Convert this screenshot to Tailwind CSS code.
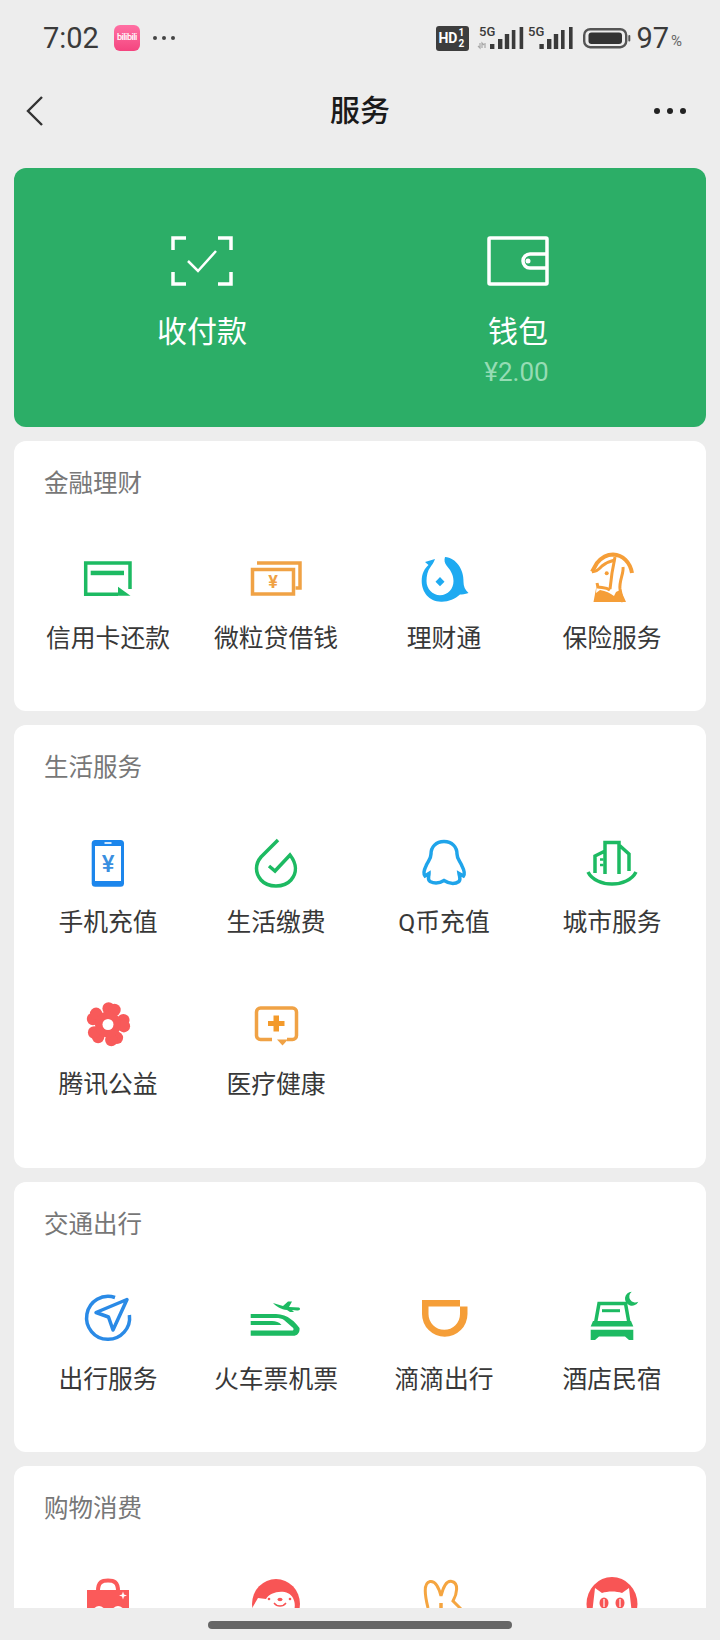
<!DOCTYPE html>
<html lang="zh-CN">
<head>
    <meta charset="UTF-8">
    <meta name="viewport" content="width=device-width, initial-scale=1.0">
    <title>服务</title>
    <script src="https://cdn.jsdelivr.net/npm/@tailwindcss/browser@4"></script>
</head>
<body class="bg-[#ededed] font-['Roboto','Noto_Sans_CJK_SC',sans-serif]">
<div class="relative h-[1640px] w-[720px] overflow-hidden">

    <!-- Status bar -->
    <div class="flex h-[76px] items-center pl-[43px] pr-[38px]">
        <span class="text-[29px] leading-none text-[#3a3a3a]">7:02</span>
        <div class="ml-[15px] flex h-[26px] w-[26px] items-center justify-center overflow-hidden rounded-[6px] bg-gradient-to-b from-[#ff6fa3] to-[#f4447f] text-[9px] font-medium tracking-[-0.5px] text-white">bilibili</div>
        <div class="ml-[13px] flex gap-[5px]">
            <span class="h-[4px] w-[4px] rounded-full bg-[#444]"></span>
            <span class="h-[4px] w-[4px] rounded-full bg-[#444]"></span>
            <span class="h-[4px] w-[4px] rounded-full bg-[#444]"></span>
        </div>
        <div class="ml-auto flex items-center">
            <div class="flex h-[25px] w-[33px] items-center rounded-[3px] bg-[#3d3d3d] pl-[2px] text-white">
                <span class="text-[14px] font-bold leading-none">HD</span>
                <span class="ml-[1px] flex flex-col text-[10px] font-bold leading-[11px]"><span>1</span><span>2</span></span>
            </div>
            <svg class="ml-[8px]" width="47" height="26" viewBox="0 0 47 26">
                <text x="2" y="11" font-size="13" font-weight="500" fill="#3a3a3a" font-family="Roboto">5G</text>
                <path d="M3 18v5l-2-2M5 23v-5l2 2M8 18v5" stroke="#a8a8a8" stroke-width="1.2" fill="none"/>
                <g fill="#3a3a3a">
                    <rect x="13" y="19" width="4.400" height="5"/><rect x="21" y="14" width="4.400" height="10"/><rect x="27.800" y="9" width="4.400" height="15"/><rect x="34.800" y="5" width="3.600" height="19"/><rect x="42.600" y="2" width="3.600" height="22"/>
                </g>
            </svg>
            <svg class="ml-[4px]" width="45" height="26" viewBox="0 0 45 26">
                <text x="0" y="11" font-size="13" font-weight="500" fill="#3a3a3a" font-family="Roboto">5G</text>
                <g fill="#3a3a3a">
                    <rect x="11.400" y="19" width="4.400" height="5"/><rect x="19" y="14" width="4.400" height="10"/><rect x="25.800" y="9" width="4.400" height="15"/><rect x="33" y="5" width="3.600" height="19"/><rect x="41" y="2" width="3.600" height="22"/>
                </g>
            </svg>
            <svg class="ml-[10px]" width="48" height="22" viewBox="0 0 48 22">
                <rect x="1.200" y="2.200" width="42" height="18" rx="6" fill="none" stroke="#555" stroke-width="2.400"/>
                <rect x="5.500" y="5.500" width="33.500" height="11.500" rx="3" fill="#333"/>
                <rect x="45.300" y="8" width="2" height="6.500" rx="1" fill="#555"/>
            </svg>
            <span class="ml-[5px] text-[29px] leading-none text-[#3a3a3a]">97</span>
            <span class="ml-[2px] mt-[6px] text-[15px] leading-none text-[#666]">%</span>
        </div>
    </div>

    <!-- Nav bar -->
    <div class="relative flex h-[70px] items-center justify-center">
        <svg class="absolute left-[25px] top-[19px]" width="20" height="32" viewBox="0 0 20 32">
            <path d="M17 2 L3 16 L17 30" fill="none" stroke="#333" stroke-width="2.400"/>
        </svg>
        <h1 class="text-[30px] font-medium leading-none text-[#1a1a1a]">服务</h1>
        <div class="absolute right-[34px] top-[32px] flex gap-[7px]">
            <span class="h-[6px] w-[6px] rounded-full bg-[#222]"></span>
            <span class="h-[6px] w-[6px] rounded-full bg-[#222]"></span>
            <span class="h-[6px] w-[6px] rounded-full bg-[#222]"></span>
        </div>
    </div>

    <div class="flex flex-col gap-[14px] px-[14px] pt-[22px]">

        <!-- Pay / wallet -->
        <div class="grid h-[259px] grid-cols-2 rounded-[12px] bg-[#2cae67] px-[30px] pt-[68px] text-white">
            <div class="flex flex-col items-center">
                <svg width="62" height="50" viewBox="0 0 62 50" fill="none" stroke="#fff" stroke-width="3.500">
                    <path d="M15 2H2V14M47 2H60V14M2 36V48H15M60 36V48H47"/>
                    <path d="M17 25 L27 35 L45 15" stroke-width="2.500"/>
                </svg>
                <span class="mt-[24px] text-[30px] leading-[44px]">收付款</span>
            </div>
            <div class="flex flex-col items-center">
                <svg width="62" height="50" viewBox="0 0 62 50" fill="none" stroke="#fff" stroke-width="3.500">
                    <rect x="2" y="2" width="58" height="46" rx="1"/>
                    <path d="M60 18H43a7 7 0 0 0 0 14H60"/>
                    <circle cx="41" cy="25" r="2.500" fill="#fff" stroke="none"/>
                </svg>
                <span class="mt-[24px] text-[30px] leading-[44px]">钱包</span>
                <span class="-ml-[3px] mt-[3px] text-[26px] leading-[30px] text-[#96dcb4]">¥2.00</span>
            </div>
        </div>

        <!-- 金融理财 -->
        <section class="h-[270px] rounded-[12px] bg-white pt-[29px]">
            <h2 class="pl-[30px] text-[24.500px] leading-[28px] text-[#777]">金融理财</h2>
            <div class="mt-[51px] grid grid-cols-4 px-[10px]">
                <div class="flex flex-col items-center">
                    <svg width="60" height="60" viewBox="0 0 60 60" fill="none">
                        <path d="M52 40V14H7.700V45.300H40" stroke="#1dba62" stroke-width="3.500"/>
                        <rect x="12.700" y="21.700" width="33.300" height="4.500" fill="#1dba62"/>
                        <path d="M40 37.700 L52.500 46.800 H40Z" fill="#1dba62"/>
                    </svg>
                    <span class="mt-[13px] text-[24.800px] leading-[34px] text-[#383838]">信用卡还款</span>
                </div>
                <div class="flex flex-col items-center">
                    <svg width="60" height="60" viewBox="0 0 60 60" fill="none" stroke="#f0a245" stroke-width="3.500">
                        <rect x="6.500" y="20.500" width="41" height="24.500"/>
                        <path d="M11 14H54V39H49.500"/>
                        <text x="27" y="39" text-anchor="middle" font-size="18" font-weight="700" font-family="Roboto" fill="#f0a245" stroke="none">¥</text>
                    </svg>
                    <span class="mt-[13px] text-[24.800px] leading-[34px] text-[#383838]">微粒贷借钱</span>
                </div>
                <div class="flex flex-col items-center">
                    <svg width="60" height="60" viewBox="0 0 60 60" fill="#1eaaf1">
                        <path d="M31 8C42 9 50 20 49.500 33C49.500 37 51 41 54.500 44C51 45 48 45.500 46 45.500C41 50 34 53 27 52.700C15 52.500 7.700 43 7.700 32C7.700 24 11 19 14.500 16L11 13L21 10C20 13 18 16 16.500 18C13.500 21.500 12.500 27 12.500 32C12.500 40 18.500 46.200 26 46.200C34 46.200 39.500 40 39.500 32C39.500 25 35.500 20 32.500 16.500C30.500 14 30 11 31 8Z"/>
                        <path d="M26 28 L30.500 32.700 L26 37.200 L21.500 32.700Z"/>
                    </svg>
                    <span class="mt-[13px] text-[24.800px] leading-[34px] text-[#383838]">理财通</span>
                </div>
                <div class="flex flex-col items-center">
                    <svg width="60" height="60" viewBox="0 0 60 60" fill="none" stroke="#f59e38" stroke-width="3">
                        <path d="M10 22.700L15 14C20 8 26 5.500 31 5.500C41 6 48 13 50 24" stroke-width="4"/>
                        <path d="M10 22.700C15 23 17 20 20 17C24 14 28 12 33 11"/>
                        <path d="M33 8L30 24L28 40"/>
                        <circle cx="24.700" cy="24.300" r="2" fill="#f59e38" stroke="none"/>
                        <path d="M41 18C42 24 37 32 38 40C39 45 40 50 41 53"/>
                        <path d="M15 34L16 38C20 39 24 38 28 41"/>
                        <path d="M15 34L11.500 53H44C42 48 40 44 38 41L34 43L32 47C28 44 24 42 18 41L14 44Z" fill="#f59e38" stroke="none"/>
                    </svg>
                    <span class="mt-[13px] text-[24.800px] leading-[34px] text-[#383838]">保险服务</span>
                </div>
            </div>
        </section>

        <!-- 生活服务 -->
        <section class="h-[443px] rounded-[12px] bg-white pt-[29px]">
            <h2 class="pl-[30px] text-[24.500px] leading-[28px] text-[#777]">生活服务</h2>
            <div class="mt-[51px] grid grid-cols-4 gap-y-[55px] px-[10px]">
                <div class="flex flex-col items-center">
                    <svg width="60" height="60" viewBox="0 0 60 60">
                        <rect x="13.700" y="7" width="32.300" height="46.700" rx="3.500" fill="#1c86ec"/>
                        <rect x="17" y="13" width="26" height="35" fill="#fff"/>
                        <rect x="26.500" y="9.200" width="7" height="1.600" fill="#fff"/>
                        <text x="30" y="39" text-anchor="middle" font-size="24" font-weight="500" font-family="Roboto" fill="#3a8fe0">¥</text>
                    </svg>
                    <span class="mt-[13px] text-[24.800px] leading-[34px] text-[#383838]">手机充值</span>
                </div>
                <div class="flex flex-col items-center">
                    <svg width="60" height="60" viewBox="0 0 60 60" fill="none" stroke="#1dba62" stroke-width="3.500">
                        <path d="M32 7 L15 24 C9 31 9 40 15 47 C22 55 38 55 45 47 C51 40 51 31 44 22 L29 38 L23 33"/>
                    </svg>
                    <span class="mt-[13px] text-[24.800px] leading-[34px] text-[#383838]">生活缴费</span>
                </div>
                <div class="flex flex-col items-center">
                    <svg width="60" height="60" viewBox="0 0 60 60" fill="none" stroke="#1fa4ea" stroke-width="3.500">
                        <path d="M30 8.500 C22 8.500 17 14 17 21 C17 26 14 28 12 33 C10 37 9.500 41 11 43 L15 40.500 C15 44 13 46 16 48.500 C21 51 26 50 30 47.500 C34 50 40 52 45 48.500 C47 46 45.500 44 45 40.500 L49.500 43 C51 41 50 37 48 33 C46 28 43 26 43 21 C43 14 38 8.500 30 8.500Z"/>
                    </svg>
                    <span class="mt-[13px] text-[24.800px] leading-[34px] text-[#383838]">Q币充值</span>
                </div>
                <div class="flex flex-col items-center">
                    <svg width="60" height="60" viewBox="0 0 60 60" fill="none" stroke="#1dba62" stroke-width="3.500">
                        <path d="M6 39 C14 55 46 55 54 39"/>
                        <path d="M23 41V9.500H37V41M23 18 L13 23V40M37 12 L47 21V38"/>
                        <path d="M18 26.500h3.500M18 32h3.500" stroke-width="2.500"/>
                    </svg>
                    <span class="mt-[13px] text-[24.800px] leading-[34px] text-[#383838]">城市服务</span>
                </div>
                <div class="flex flex-col items-center">
                    <svg width="60" height="60" viewBox="0 0 60 60" fill="#f85a5a">
                        <circle cx="30.600" cy="13.500" r="6.200"/><circle cx="36.500" cy="14.900" r="6.200"/><circle cx="45.400" cy="25.100" r="6.200"/><circle cx="45.900" cy="31.200" r="6.200"/><circle cx="38.900" cy="42.800" r="6.200"/><circle cx="33.300" cy="45.100" r="6.200"/><circle cx="20.100" cy="42.100" r="6.200"/><circle cx="16.100" cy="37.500" r="6.200"/><circle cx="15" cy="24" r="6.200"/><circle cx="18.100" cy="18.800" r="6.200"/>
                        <circle cx="30" cy="29.500" r="13"/>
                        <circle cx="30" cy="29.500" r="5.500" fill="#fff"/>
                    </svg>
                    <span class="mt-[13px] text-[24.800px] leading-[34px] text-[#383838]">腾讯公益</span>
                </div>
                <div class="flex flex-col items-center">
                    <svg width="60" height="60" viewBox="0 0 60 60" fill="none">
                        <path d="M26 44.500H14.500a4 4 0 0 1-4-4V17a4 4 0 0 1 4-4H46.500a4 4 0 0 1 4 4V40.500a4 4 0 0 1-4 4H41" stroke="#f0a245" stroke-width="3.500"/>
                        <path d="M31 44.500H42L36.500 50.500Z" fill="#f0a245"/>
                        <path d="M27.500 20.500h5.500v5.500h5.500v5h-5.500v5.500h-5.500v-5.500h-5.500v-5h5.500Z" fill="#f39a2b"/>
                    </svg>
                    <span class="mt-[13px] text-[24.800px] leading-[34px] text-[#383838]">医疗健康</span>
                </div>
            </div>
        </section>

        <!-- 交通出行 -->
        <section class="h-[270px] rounded-[12px] bg-white pt-[29px]">
            <h2 class="pl-[30px] text-[24.500px] leading-[28px] text-[#777]">交通出行</h2>
            <div class="mt-[51px] grid grid-cols-4 px-[10px]">
                <div class="flex flex-col items-center">
                    <svg width="60" height="60" viewBox="0 0 60 60" fill="none" stroke="#2a8ae6">
                        <path d="M37 7.500A21.500 21.500 0 1 0 51.400 25" stroke-width="3.500"/>
                        <path d="M49 9.500L18 22.500L30.500 27L35 40Z" stroke-width="3.500" stroke-linejoin="round"/>
                    </svg>
                    <span class="mt-[13px] text-[24.800px] leading-[34px] text-[#383838]">出行服务</span>
                </div>
                <div class="flex flex-col items-center">
                    <svg width="60" height="60" viewBox="0 0 60 60" fill="#1dba62">
                        <path d="M27 13 L37 16 L42 11.500H46L43 17 L53 17.500C55 19 54 20.500 51 20.500L46 20L48 22H44L41 20C35 19.500 31 17 27 13Z"/>
                        <path d="M4.700 24H30C42 24 50 33 53.500 38C54 42 52 45.700 47 45.700H4.700V40.500H46C48 40.500 48 38 46 37L38 30C36 28.500 33 28 30 28H4.700Z"/>
                        <path d="M4.700 31H26C30 31 33 32 35.500 35H4.700Z"/>
                    </svg>
                    <span class="mt-[13px] text-[24.800px] leading-[34px] text-[#383838]">火车票机票</span>
                </div>
                <div class="flex flex-col items-center">
                    <svg width="60" height="60" viewBox="0 0 60 60">
                        <path fill-rule="evenodd" fill="#f59e38" d="M8 10H46V16.500H53.500V24A22.750 22.750 0 0 1 8 24ZM14.500 16.500V24A15.750 15.750 0 0 0 46 24V16.500Z"/>
                    </svg>
                    <span class="mt-[13px] text-[24.800px] leading-[34px] text-[#383838]">滴滴出行</span>
                </div>
                <div class="flex flex-col items-center">
                    <svg width="60" height="60" viewBox="0 0 60 60" fill="none">
                        <path d="M13.500 33 L17 13.500H43.500L47 33" stroke="#1dba62" stroke-width="3.500"/>
                        <path d="M20 20.700H38" stroke="#1dba62" stroke-width="3"/>
                        <path d="M11 31H49L51.300 36.500H8.700Z" fill="#1dba62"/>
                        <path d="M8.700 39.700H51.300V50H47L43 46.500H17L13 50H8.700Z" fill="#1dba62"/>
                        <path d="M49.700 1.700A7 7 0 1 0 56.300 11.700A6 6 0 0 1 49.700 1.700Z" fill="#1dba62"/>
                    </svg>
                    <span class="mt-[13px] text-[24.800px] leading-[34px] text-[#383838]">酒店民宿</span>
                </div>
            </div>
        </section>

        <!-- 购物消费 -->
        <section class="h-[200px] rounded-[12px] bg-white pt-[29px]">
            <h2 class="pl-[30px] text-[24.500px] leading-[28px] text-[#777]">购物消费</h2>
            <div class="mt-[51px] grid grid-cols-4 px-[10px]">
                <div class="flex flex-col items-center">
                    <svg width="60" height="60" viewBox="0 0 60 60">
                        <path d="M20 17 C20 8 24 6.500 30 6.500 C36 6.500 40 8 40 17" fill="none" stroke="#fb5a5a" stroke-width="4"/>
                        <rect x="9" y="16" width="42" height="40" fill="#fb5a5a"/>
                        <circle cx="21" cy="38" r="6" fill="#fff"/>
                        <circle cx="40" cy="38" r="6" fill="#fff"/>
                        <path d="M45 17.500L46 20.500L49 21.500L46 22.500L45 25.500L44 22.500L41 21.500L44 20.500Z" fill="#fff"/>
                    </svg>
                </div>
                <div class="flex flex-col items-center">
                    <svg width="60" height="60" viewBox="0 0 60 60">
                        <ellipse cx="30" cy="30" rx="24" ry="25" fill="#f85555"/>
                        <path d="M5 36L12 24L20 25C24 17 42 14 47 24C50 30 49 36 46 40H6Z" fill="#fff"/>
                        <circle cx="23" cy="25" r="1.300" fill="#f85555"/><circle cx="44" cy="25" r="1.300" fill="#f85555"/>
                        <ellipse cx="34" cy="25.500" rx="2.500" ry="1.800" fill="#f85555"/>
                        <path d="M28 29 C31 33 37 33 40 29" fill="none" stroke="#f85555" stroke-width="1.300"/>
                    </svg>
                </div>
                <div class="flex flex-col items-center">
                    <svg width="60" height="60" viewBox="0 0 60 60" fill="none" stroke="#f5a540" stroke-width="3">
                        <path d="M14 34C11 22 9 9 16 7.500C22 6.500 25 14 27 22C29 14 32 6 38 7.500C45 9 43 20 39 27L47 35"/>
                        <path d="M27 29v5" stroke-width="3.500"/>
                    </svg>
                </div>
                <div class="flex flex-col items-center">
                    <svg width="60" height="60" viewBox="0 0 60 60">
                        <ellipse cx="30" cy="30" rx="25.500" ry="27" fill="#f85555"/>
                        <path d="M13 14L20 19C26 17 34 17 40 19L47 14L50 40H10Z" fill="#fff"/>
                        <ellipse cx="22" cy="29" rx="4.500" ry="5.500" fill="#f85555"/>
                        <ellipse cx="38" cy="29" rx="4.500" ry="5.500" fill="#f85555"/>
                        <path d="M22 25v8M38 25v8" stroke="#fff" stroke-width="1.200"/>
                    </svg>
                </div>
            </div>
        </section>
    </div>

    <!-- Home indicator strip over the scrolled content -->
    <div class="absolute bottom-0 left-0 flex h-[32px] w-full items-start justify-center bg-[#ededed] pt-[12.500px]">
        <div class="h-[8px] w-[304px] rounded-full bg-[#666]"></div>
    </div>
</div>
</body>
</html>
